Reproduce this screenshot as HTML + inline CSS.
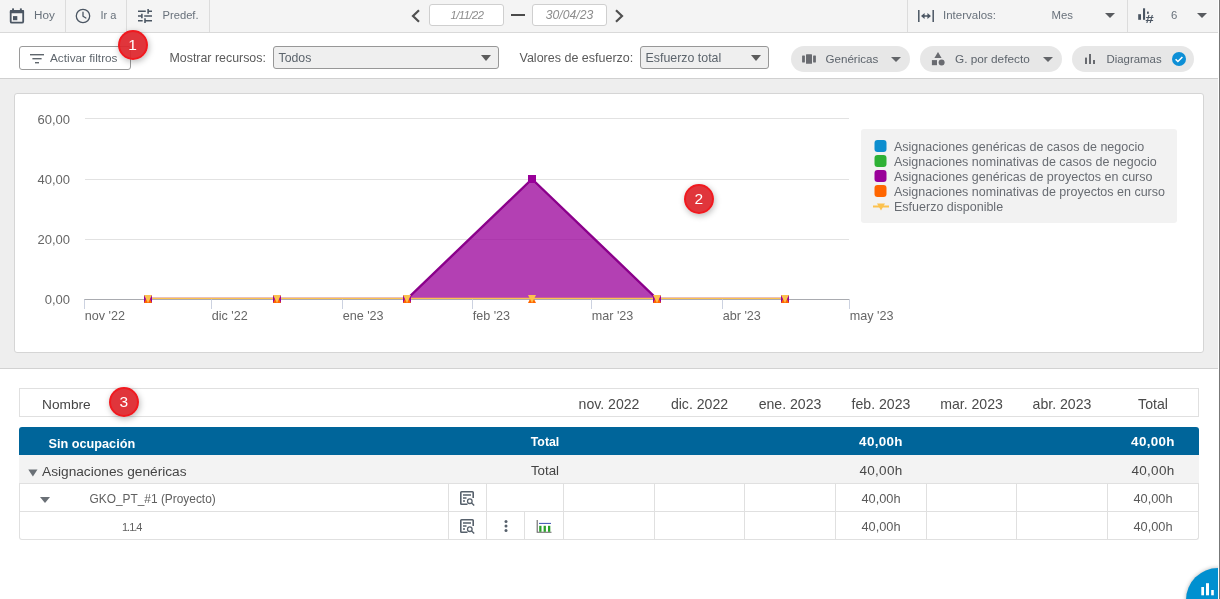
<!DOCTYPE html>
<html lang="es">
<head>
<meta charset="utf-8">
<title>Ocupación de recursos</title>
<style>
*{box-sizing:border-box;margin:0;padding:0}
html,body{width:1220px;height:599px;overflow:hidden;background:#fff;font-family:"Liberation Sans",sans-serif;color:#4a4a4a}
body{position:relative}
#root{position:absolute;left:0;top:0;width:1220px;height:599px;will-change:transform}
.t{position:absolute;height:20px;line-height:20px;white-space:nowrap}
.b{position:absolute}
#topbar{left:0;top:0;width:1220px;height:33px;background:#f4f4f4;border-bottom:1px solid #d9d9d9}
.sep{position:absolute;top:0;width:1px;height:32px;background:#dcdcdc}
#filterbar{left:0;top:33px;width:1220px;height:46px;background:#fff;border-bottom:1px solid #d0d0d0}
#chartzone{left:0;top:79px;width:1220px;height:290px;background:#eeeeee;border-bottom:1px solid #d2d2d2}
#card{left:14px;top:93px;width:1190px;height:260px;background:#fff;border:1px solid #d5d5d5;border-radius:3px}
.inp{position:absolute;top:4px;height:22px;background:#fff;border:1px solid #cfcfcf;border-radius:3px}
.sel{position:absolute;top:46px;height:23px;border:1px solid #979797;border-radius:3px;background:#efefef}
.arrow{position:absolute;width:0;height:0;border-left:5px solid transparent;border-right:5px solid transparent;border-top:6px solid #5c5c5c}
.pill{position:absolute;top:46px;height:26px;border-radius:13px;background:#e7e7e7}
.badge{position:absolute;width:30px;height:30px;border-radius:15px;background:rgba(222,38,44,.93);border:2px solid rgba(240,24,30,.95);color:#fff;font-size:15.5px;line-height:26px;text-align:center;box-shadow:1px 2px 6px rgba(0,0,0,.28)}
.vl{position:absolute;width:1px;background:#e0e0e0}
.hl{position:absolute;height:1px;background:#e0e0e0}
svg{position:absolute;overflow:visible}
</style>
</head>
<body>
<div id="root">
<div class="b" id="topbar"></div>
<div class="sep" style="left:65px"></div>
<div class="sep" style="left:126px"></div>
<div class="sep" style="left:209px"></div>
<div class="sep" style="left:907px"></div>
<div class="sep" style="left:1127px"></div>
<svg style="left:9px;top:8px" width="16" height="16" viewBox="0 0 16 16"><rect x="1.7" y="2.9" width="12.5" height="11.8" rx="1.3" fill="none" stroke="#4b5663" stroke-width="1.8"/><g fill="#4b5663"><rect x="0.8" y="2" width="14.3" height="3.3" rx="1"/><rect x="3.1" y="0.4" width="1.9" height="2.6"/><rect x="10.9" y="0.4" width="1.9" height="2.6"/><rect x="4" y="8.1" width="4.3" height="4.1"/></g></svg>
<div class="t" style="top:4.5px;font-size:11.7px;color:#68717b;left:34px;">Hoy</div>
<svg style="left:75px;top:8px" width="16" height="16" viewBox="0 0 16 16"><circle cx="8" cy="8" r="6.7" fill="none" stroke="#4b5663" stroke-width="1.3"/><path d="M8 4.2V8.3L10.9 10" fill="none" stroke="#4b5663" stroke-width="1.3" stroke-linecap="round" stroke-linejoin="round"/></svg>
<div class="t" style="top:4.5px;font-size:11px;color:#68717b;left:100.5px;">Ir a</div>
<svg style="left:138px;top:9px" width="14" height="14" viewBox="3 3 18 18"><path fill="#4b5663" d="M3 17v2h6v-2H3zM3 5v2h10V5H3zm10 16v-2h8v-2h-8v-2h-2v6h2zM7 9v2H3v2h4v2h2V9H7zm14 4v-2H11v2h10zm-6-4h2V7h4V5h-4V3h-2v6z"/></svg>
<div class="t" style="top:4.5px;font-size:11.2px;color:#68717b;left:162.5px;">Predef.</div>
<svg style="left:410px;top:9px" width="11" height="14" viewBox="0 0 11 14"><path d="M9 1.2L3 7l6 5.8" fill="none" stroke="#505050" stroke-width="2.2"/></svg>
<div class="inp" style="left:429px;width:75px"></div>
<div class="t" style="top:5px;font-size:11.2px;color:#8c8c8c;left:367px;width:200px;text-align:center;font-style:italic;letter-spacing:-0.5px;">1/11/22</div>
<div class="b" style="left:511px;top:14px;width:14px;height:2px;background:#4a4a4a"></div>
<div class="inp" style="left:532px;width:75px"></div>
<div class="t" style="top:5px;font-size:12.2px;color:#8c8c8c;left:469.5px;width:200px;text-align:center;font-style:italic;">30/04/23</div>
<svg style="left:614px;top:9px" width="11" height="14" viewBox="0 0 11 14"><path d="M2 1.2L8 7l-6 5.8" fill="none" stroke="#505050" stroke-width="2.2"/></svg>
<svg style="left:918px;top:10px" width="16" height="12" viewBox="0 0 16 12"><g fill="none" stroke="#4b5663" stroke-width="1.5"><path d="M0.8 0v12M15.2 0v12M5 6h6"/></g><path fill="#4b5663" d="M6.6 2.9L3 6l3.6 3.1zM9.4 2.9L13 6 9.4 9.1z"/></svg>
<div class="t" style="top:5px;font-size:11.5px;color:#68717b;left:943px;">Intervalos:</div>
<div class="t" style="top:5px;font-size:11.4px;color:#68717b;left:1051.5px;">Mes</div>
<div class="arrow" style="left:1105px;top:13px;border-top:5.5px solid #585b5f"></div>
<svg style="left:1137px;top:8px" width="17" height="16" viewBox="0 0 17 16"><g fill="#4b5663"><rect x="1.2" y="6.2" width="2.8" height="5.6"/><rect x="6" y="0.3" width="2.1" height="11.5"/><rect x="10" y="3.6" width="1.8" height="2.2"/></g><text x="8.6" y="14.8" font-size="11" font-weight="700" fill="#4b5663" font-family="Liberation Sans, sans-serif" textLength="8.2" lengthAdjust="spacingAndGlyphs">#</text></svg>
<div class="t" style="top:5px;font-size:11.4px;color:#68717b;left:1171px;">6</div>
<div class="arrow" style="left:1197px;top:13px;border-top:5.5px solid #585b5f"></div>
<div class="b" id="filterbar"></div>
<div class="b" style="left:19px;top:46px;width:112px;height:24px;border:1px solid #9a9a9a;border-radius:3px;background:#fff"></div>
<svg style="left:30px;top:54px" width="14" height="10" viewBox="0 0 14 10"><g fill="#5f666d"><rect x="0" y="0" width="14" height="1.4"/><rect x="2.4" y="4" width="9.2" height="1.4"/><rect x="5" y="8" width="4" height="1.4"/></g></svg>
<div class="t" style="top:47.5px;font-size:11.8px;color:#5f666d;left:50px;">Activar filtros</div>
<div class="t" style="top:48px;font-size:12.4px;color:#5a5a5a;left:169.5px;">Mostrar recursos:</div>
<div class="sel" style="left:273px;width:226px"></div>
<div class="t" style="top:47.5px;font-size:12.3px;color:#5c646c;left:278.5px;">Todos</div>
<div class="arrow" style="left:481px;top:55px"></div>
<div class="t" style="top:48px;font-size:12.5px;color:#5a5a5a;left:519.5px;">Valores de esfuerzo:</div>
<div class="sel" style="left:640px;width:129px"></div>
<div class="t" style="top:47.5px;font-size:12.4px;color:#5c646c;left:645.5px;">Esfuerzo total</div>
<div class="arrow" style="left:751px;top:55px"></div>
<div class="pill" style="left:791px;width:119px"></div>
<svg style="left:801px;top:53px" width="15" height="12" viewBox="0 0 15 12"><g fill="#696b70"><rect x="1.1" y="2.6" width="2.8" height="6.8" rx=".4"/><rect x="5" y="1.2" width="6" height="9.6" rx=".5"/><rect x="12.1" y="2.6" width="2.8" height="6.8" rx=".4"/></g></svg>
<div class="t" style="top:49px;font-size:11.6px;color:#5d646c;left:825.5px;">Genéricas</div>
<div class="arrow" style="left:891px;top:56.5px;border-top:5.5px solid #636569"></div>
<div class="pill" style="left:920px;width:142px"></div>
<svg style="left:931px;top:52px" width="14" height="14" viewBox="0 0 14 14"><g fill="#696b70"><path d="M7 0L10.6 6H3.4z"/><rect x="0.9" y="8.1" width="5.1" height="5.1"/><circle cx="10.6" cy="10.6" r="3"/></g></svg>
<div class="t" style="top:49px;font-size:11.8px;color:#5d646c;left:955px;">G. por defecto</div>
<div class="arrow" style="left:1043px;top:56.5px;border-top:5.5px solid #636569"></div>
<div class="pill" style="left:1072px;width:122px"></div>
<svg style="left:1085px;top:54px" width="11" height="10" viewBox="0 0 11 10"><g fill="#696b70"><rect x="0" y="3.6" width="2" height="6.4"/><rect x="4" y="0" width="2" height="10"/><rect x="8" y="6" width="2" height="4"/></g></svg>
<div class="t" style="top:49px;font-size:11.4px;color:#5d646c;left:1106.5px;">Diagramas</div>
<svg style="left:1172px;top:52px" width="14" height="14" viewBox="0 0 14 14"><circle cx="7" cy="7" r="7" fill="#0d8fd6"/><path d="M3.6 7.2l2.3 2.3 4.5-4.6" fill="none" stroke="#fff" stroke-width="1.5"/></svg>
<div class="b" id="chartzone"></div>
<div class="b" id="card"></div>
<svg style="left:0;top:0" width="1220" height="599" viewBox="0 0 1220 599" font-family="Liberation Sans, sans-serif">
<path d="M85 118.5H849" stroke="#e2e2e2" stroke-width="1" fill="none"/>
<path d="M85 179.5H849" stroke="#e2e2e2" stroke-width="1" fill="none"/>
<path d="M85 239.5H849" stroke="#e2e2e2" stroke-width="1" fill="none"/>
<path d="M84 299.5H849.5" stroke="#a9abb0" stroke-width="1" fill="none"/>
<path d="M84.5 299.5V309" stroke="#ccd2e0" stroke-width="1" fill="none"/>
<path d="M211.5 299.5V309" stroke="#ccd2e0" stroke-width="1" fill="none"/>
<path d="M342.5 299.5V309" stroke="#ccd2e0" stroke-width="1" fill="none"/>
<path d="M472.5 299.5V309" stroke="#ccd2e0" stroke-width="1" fill="none"/>
<path d="M591.5 299.5V309" stroke="#ccd2e0" stroke-width="1" fill="none"/>
<path d="M722.5 299.5V309" stroke="#ccd2e0" stroke-width="1" fill="none"/>
<path d="M849.5 299.5V309" stroke="#ccd2e0" stroke-width="1" fill="none"/>
<text x="84.7" y="320" font-size="12.6" fill="#666">nov '22</text>
<text x="211.7" y="320" font-size="12.6" fill="#666">dic '22</text>
<text x="342.7" y="320" font-size="12.6" fill="#666">ene '23</text>
<text x="472.7" y="320" font-size="12.6" fill="#666">feb '23</text>
<text x="591.7" y="320" font-size="12.6" fill="#666">mar '23</text>
<text x="722.7" y="320" font-size="12.6" fill="#666">abr '23</text>
<text x="849.7" y="320" font-size="12.6" fill="#666">may '23</text>
<text x="70" y="124" font-size="13" fill="#666" text-anchor="end">60,00</text>
<text x="70" y="184" font-size="13" fill="#666" text-anchor="end">40,00</text>
<text x="70" y="244" font-size="13" fill="#666" text-anchor="end">20,00</text>
<text x="70" y="304" font-size="13" fill="#666" text-anchor="end">0,00</text>
<defs><clipPath id="plotclip"><rect x="84" y="100" width="766" height="199"/></clipPath></defs>
<g clip-path="url(#plotclip)">
<path d="M148 299H407L532 179L657 299H785Z" fill="#990099" fill-opacity=".75"/>
<path d="M148 299H407L532 179L657 299H785" fill="none" stroke="#8b008b" stroke-width="2.4" stroke-linejoin="round"/>
<path d="M148 299H785" stroke="#fcc24f" stroke-width="2.5" fill="none"/>
</g>
<rect x="144" y="295" width="8" height="8" fill="#990099"/>
<rect x="273" y="295" width="8" height="8" fill="#990099"/>
<rect x="403" y="295" width="8" height="8" fill="#990099"/>
<rect x="528" y="175" width="8" height="8" fill="#990099"/>
<rect x="653" y="295" width="8" height="8" fill="#990099"/>
<rect x="781" y="295" width="8" height="8" fill="#990099"/>
<path d="M148 295L152 303H144Z" fill="#ff6600"/>
<path d="M277 295L281 303H273Z" fill="#ff6600"/>
<path d="M407 295L411 303H403Z" fill="#ff6600"/>
<path d="M532 295L536 303H528Z" fill="#ff6600"/>
<path d="M657 295L661 303H653Z" fill="#ff6600"/>
<path d="M785 295L789 303H781Z" fill="#ff6600"/>
<path d="M144 295H152L148 303Z" fill="#fcc24f"/>
<path d="M273 295H281L277 303Z" fill="#fcc24f"/>
<path d="M403 295H411L407 303Z" fill="#fcc24f"/>
<path d="M528 295H536L532 303Z" fill="#fcc24f"/>
<path d="M653 295H661L657 303Z" fill="#fcc24f"/>
<path d="M781 295H789L785 303Z" fill="#fcc24f"/>
<rect x="861" y="129" width="316" height="94" rx="3" fill="#f2f2f2"/>
<rect x="874.5" y="140" width="12" height="12" rx="3" fill="#0d8ecf"/>
<text x="894" y="151" font-size="12.5" fill="#686c72">Asignaciones genéricas de casos de negocio</text>
<rect x="874.5" y="155" width="12" height="12" rx="3" fill="#2eb135"/>
<text x="894" y="166" font-size="12.5" fill="#686c72">Asignaciones nominativas de casos de negocio</text>
<rect x="874.5" y="170" width="12" height="12" rx="3" fill="#990099"/>
<text x="894" y="181" font-size="12.5" fill="#686c72">Asignaciones genéricas de proyectos en curso</text>
<rect x="874.5" y="185" width="12" height="12" rx="3" fill="#ff6600"/>
<text x="894" y="196" font-size="12.5" fill="#686c72">Asignaciones nominativas de proyectos en curso</text>
<path d="M873 206.5H889" stroke="#fcc24f" stroke-width="2"/><path d="M877 203.5h8l-4 7z" fill="#fcc24f"/>
<text x="894" y="211" font-size="12.5" fill="#686c72">Esfuerzo disponible</text>
</svg>
<div class="b" style="left:19px;top:388px;width:1180px;height:29px;border:1px solid #e0e0e0;background:#fff"></div>
<div class="t" style="top:394.5px;font-size:13.7px;color:#454545;left:42px;">Nombre</div>
<div class="t" style="top:394px;font-size:14.1px;color:#4a4a4a;left:509.0px;width:200px;text-align:center;">nov. 2022</div>
<div class="t" style="top:394px;font-size:14.1px;color:#4a4a4a;left:599.5px;width:200px;text-align:center;">dic. 2022</div>
<div class="t" style="top:394px;font-size:14.1px;color:#4a4a4a;left:690.0px;width:200px;text-align:center;">ene. 2023</div>
<div class="t" style="top:394px;font-size:14.1px;color:#4a4a4a;left:781.0px;width:200px;text-align:center;">feb. 2023</div>
<div class="t" style="top:394px;font-size:14.1px;color:#4a4a4a;left:871.5px;width:200px;text-align:center;">mar. 2023</div>
<div class="t" style="top:394px;font-size:14.1px;color:#4a4a4a;left:962.0px;width:200px;text-align:center;">abr. 2023</div>
<div class="t" style="top:394px;font-size:14.1px;color:#4a4a4a;left:1053.0px;width:200px;text-align:center;">Total</div>
<div class="b" style="left:19px;top:427px;width:1180px;height:28px;background:#00659a;border-radius:3px 3px 0 0"></div>
<div class="b" style="left:19px;top:455px;width:1180px;height:29px;background:#f3f3f3;border-bottom:1px solid #e0e0e0"></div>
<div class="b" style="left:19px;top:484px;width:1180px;height:56px;border:1px solid #e0e0e0;border-top:none;border-radius:0 0 3px 3px"></div>
<div class="hl" style="left:19px;top:511px;width:1180px"></div>
<div class="vl" style="left:448px;top:484px;height:55px"></div>
<div class="vl" style="left:486px;top:484px;height:55px"></div>
<div class="vl" style="left:563px;top:484px;height:55px"></div>
<div class="vl" style="left:654px;top:484px;height:55px"></div>
<div class="vl" style="left:744px;top:484px;height:55px"></div>
<div class="vl" style="left:835px;top:484px;height:55px"></div>
<div class="vl" style="left:926px;top:484px;height:55px"></div>
<div class="vl" style="left:1016px;top:484px;height:55px"></div>
<div class="vl" style="left:1107px;top:484px;height:55px"></div>
<div class="vl" style="left:524px;top:512px;height:27px"></div>
<div class="t" style="top:433.5px;font-size:12.7px;color:#fff;left:48.5px;font-weight:700;">Sin ocupación</div>
<div class="t" style="top:431.5px;font-size:12.3px;color:#fff;left:445px;width:200px;text-align:center;font-weight:700;">Total</div>
<div class="t" style="top:460.5px;font-size:13.3px;color:#444;left:445px;width:200px;text-align:center;">Total</div>
<svg style="left:28px;top:468.7px" width="10" height="8" viewBox="0 0 10 8"><path d="M0.3 0.6H9.5L4.9 7.6Z" fill="#6a7076"/></svg>
<div class="t" style="top:461.5px;font-size:13.7px;color:#444;left:42px;">Asignaciones genéricas</div>
<div class="arrow" style="left:40px;top:497px;border-top-color:#6a7076"></div>
<div class="t" style="top:488.5px;font-size:11.9px;color:#606060;left:89.5px;">GKO_PT_#1 (Proyecto)</div>
<div class="t" style="top:517px;font-size:11px;color:#606060;left:122px;letter-spacing:-1px;">1.1.4</div>
<div class="t" style="top:431.5px;font-size:13.4px;color:#fff;left:781.0px;width:200px;text-align:center;font-weight:700;letter-spacing:0.35px;">40,00h</div>
<div class="t" style="top:460.5px;font-size:13.5px;color:#484848;left:781.0px;width:200px;text-align:center;letter-spacing:0.3px;">40,00h</div>
<div class="t" style="top:489px;font-size:12.8px;color:#5a5a5a;left:781.0px;width:200px;text-align:center;">40,00h</div>
<div class="t" style="top:517px;font-size:12.8px;color:#5a5a5a;left:781.0px;width:200px;text-align:center;">40,00h</div>
<div class="t" style="top:431.5px;font-size:13.4px;color:#fff;left:1053.0px;width:200px;text-align:center;font-weight:700;letter-spacing:0.35px;">40,00h</div>
<div class="t" style="top:460.5px;font-size:13.5px;color:#484848;left:1053.0px;width:200px;text-align:center;letter-spacing:0.3px;">40,00h</div>
<div class="t" style="top:489px;font-size:12.8px;color:#5a5a5a;left:1053.0px;width:200px;text-align:center;">40,00h</div>
<div class="t" style="top:517px;font-size:12.8px;color:#5a5a5a;left:1053.0px;width:200px;text-align:center;">40,00h</div>
<svg style="left:460px;top:491px" width="15" height="15" viewBox="0 0 15 15"><g fill="none" stroke="#56606b" stroke-width="1.6" stroke-linejoin="round"><path d="M7.5 13.2H1.6Q0.8 13.2 0.8 12.4V1.6Q0.8 0.8 1.6 0.8H12.4Q13.2 0.8 13.2 1.6V7"/><path d="M3 4h8M3 7h3.5M3 10h2" stroke-width="1.3"/><circle cx="9.8" cy="10.2" r="2.3" stroke-width="1.3"/><path d="M11.6 12l2.6 2.4" stroke-width="1.4"/></g></svg>
<svg style="left:460px;top:519px" width="15" height="15" viewBox="0 0 15 15"><g fill="none" stroke="#56606b" stroke-width="1.6" stroke-linejoin="round"><path d="M7.5 13.2H1.6Q0.8 13.2 0.8 12.4V1.6Q0.8 0.8 1.6 0.8H12.4Q13.2 0.8 13.2 1.6V7"/><path d="M3 4h8M3 7h3.5M3 10h2" stroke-width="1.3"/><circle cx="9.8" cy="10.2" r="2.3" stroke-width="1.3"/><path d="M11.6 12l2.6 2.4" stroke-width="1.4"/></g></svg>
<svg style="left:504px;top:520px" width="4" height="12" viewBox="0 0 4 12"><g fill="#56606b"><circle cx="2" cy="1.5" r="1.5"/><circle cx="2" cy="6" r="1.5"/><circle cx="2" cy="10.5" r="1.5"/></g></svg>
<svg style="left:536px;top:520px" width="16" height="13" viewBox="0 0 16 13"><path d="M1.2 0V12.3H15.5" fill="none" stroke="#666" stroke-width="1.1"/><path d="M3 3.4H15" stroke="#3a4fb0" stroke-width="1"/><g fill="#2aa02a"><rect x="3.2" y="5.8" width="2.3" height="6"/><rect x="7.6" y="5.8" width="2.3" height="6"/><rect x="12" y="5.8" width="2.3" height="6"/></g></svg>
<div class="b" style="left:1186px;top:568px;width:64px;height:64px;border-radius:32px;background:#0090d0;box-shadow:0 0 4px rgba(0,0,0,.3)"></div>
<svg style="left:1201px;top:583px" width="13" height="13" viewBox="0 0 13 13"><g fill="#fff"><rect x="0.3" y="4" width="2.7" height="8.3"/><rect x="5" y="0.2" width="3" height="12.1"/><rect x="10.2" y="7" width="2.6" height="5.3"/></g></svg>
<div class="b" style="left:1218px;top:0;width:1px;height:599px;background:#fff"></div><div class="b" style="left:1219px;top:0;width:1px;height:599px;background:#777"></div>
<div class="badge" style="left:117.5px;top:29.7px">1</div>
<div class="badge" style="left:683.7px;top:183.7px">2</div>
<div class="badge" style="left:108.8px;top:386.7px">3</div>
</div>
</body>
</html>
